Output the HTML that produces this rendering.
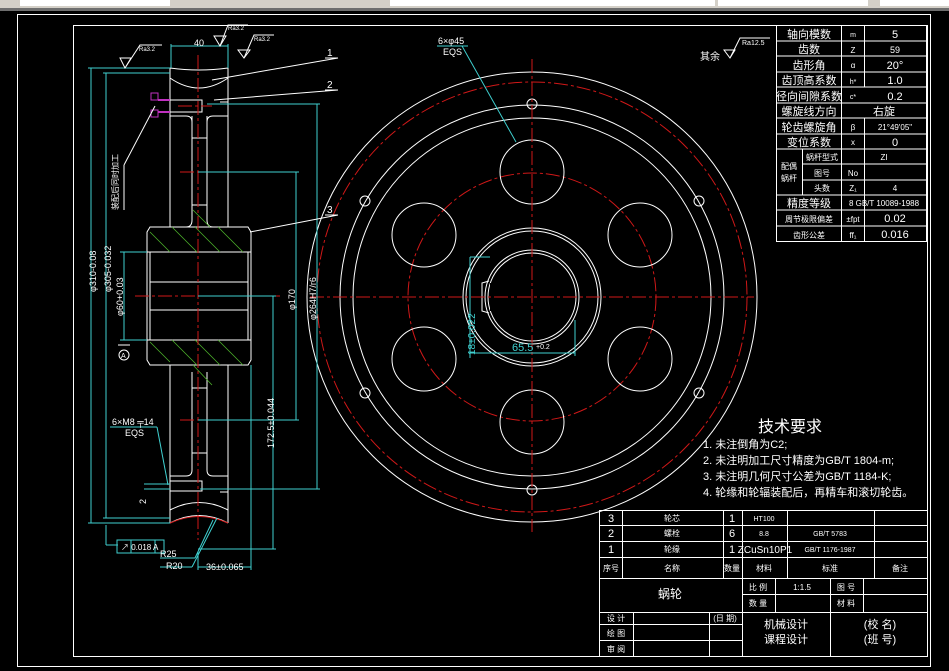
<!DOCTYPE html>
<html><head><meta charset="utf-8"><style>
html,body{margin:0;padding:0;background:#000;width:949px;height:671px;overflow:hidden}
svg{display:block}
text{font-family:"Liberation Sans","Noto Sans CJK SC",sans-serif;fill:#fff}
.c{stroke:#3fd0d0;fill:none;stroke-width:1}
.w{stroke:#fff;fill:none;stroke-width:1}
.r{stroke:#d01818;fill:none;stroke-width:1;stroke-dasharray:14 3 3 3}
.g{stroke:#4caf2a;stroke-width:0.8}
.ct{fill:#3fd0d0}
.t{font-size:10px}
</style></head><body>
<svg width="949" height="671" viewBox="0 0 949 671" xmlns="http://www.w3.org/2000/svg">
<!-- toolbar -->
<rect x="0" y="0" width="949" height="8" fill="#d4d0c8"/>
<rect x="0" y="8" width="949" height="3" fill="#6e6e6e"/>
<rect x="20" y="0" width="150" height="6" fill="#fff"/>
<rect x="390" y="0" width="240" height="6" fill="#fff"/>
<rect x="555" y="0" width="160" height="6" fill="#fff"/>
<rect x="718" y="0" width="150" height="6" fill="#fff"/>
<rect x="880" y="0" width="69" height="6" fill="#fff"/>
<!-- frames -->
<rect x="17.5" y="14.5" width="913" height="652" class="w"/>
<rect x="73.5" y="25.5" width="854" height="631" class="w"/>

<!-- ===== Right view (circle) ===== -->
<g transform="translate(532,297)">
<circle r="225" class="w"/>
<circle r="215" class="r"/>
<circle r="192" class="w"/>
<circle r="179" class="w"/>
<circle r="124" class="r"/>
<circle r="69" class="w"/>
<circle r="66" class="w"/>
<circle r="47" class="w"/>
<circle r="44" class="w"/>
<g class="w">
<circle cx="0" cy="-125" r="32"/><circle cx="0" cy="125" r="32"/>
<circle cx="-108" cy="-62" r="32"/><circle cx="108" cy="-62" r="32"/>
<circle cx="-108" cy="62" r="32"/><circle cx="108" cy="62" r="32"/>
<circle cx="0" cy="-193" r="5"/><circle cx="0" cy="193" r="5"/>
<circle cx="-167" cy="-96" r="5"/><circle cx="167" cy="-96" r="5"/>
<circle cx="-167" cy="96" r="5"/><circle cx="167" cy="96" r="5"/>
</g>
<path d="M-42,-14 L-40,-14 L-40,14 L-42,14" fill="#000" stroke="none"/>
<path d="M-43,-16 L-50,-14 L-50,14 L-43,16" class="w"/>
<line x1="-222" y1="0" x2="222" y2="0" class="r"/>
<line x1="0" y1="-238" x2="0" y2="235" class="r"/>
</g>
<!-- keyway dims -->
<line x1="470" y1="257" x2="470" y2="358" class="c"/>
<line x1="470" y1="257" x2="490" y2="257" class="c"/>
<line x1="470" y1="353" x2="575" y2="353" class="c"/>
<line x1="575" y1="320" x2="575" y2="356" class="c"/>
<text x="475" y="355" class="ct" font-size="10" transform="rotate(-90 475 355)">18±0.022</text>
<text x="512" y="351" class="ct" font-size="11">65.5</text>
<text x="536" y="349" fill="#4caf2a" font-size="7">+0.2</text>
<!-- leader 6xφ45 -->
<line x1="437" y1="46" x2="468" y2="46" class="c"/>
<line x1="462" y1="46" x2="516" y2="142" class="c"/>
<text x="438" y="44" font-size="9">6×φ45</text>
<text x="443" y="55" font-size="9">EQS</text>
<!-- roughness 其余 -->
<text x="700" y="60" font-size="10">其余</text>
<path d="M724,50 L735,50 L730,58 Z M730,58 L740,38 L770,38" class="w"/>
<text x="742" y="45" font-size="7">Ra12.5</text>

<!-- ===== Left view (section) ===== -->
<g class="w">
<path d="M170,68 L170,227 M228,68 L228,227"/>
<path d="M170,68 Q199,72 228,68"/>
<path d="M170,78 Q199,98 228,78"/>
<path d="M192,116 L192,220 Q192,227 186,227 M207,116 L207,220 Q207,227 213,227"/>
<path d="M170,116 L186,116 Q192,116 192,122 M228,116 L213,116 Q207,116 207,122"/>
<path d="M192,138 L207,138 M192,205 L207,205"/>
<path d="M150,227 L248,227 L251,232 L251,360 L248,365 L150,365 L147,360 L147,232 Z"/>
<path d="M147,252 L251,252 M147,340 L251,340 M150,252 L150,340 M248,252 L248,340"/>
<path d="M150,282 L248,282 M150,310 L248,310"/>
<path d="M170,365 L170,523 M228,365 L228,523"/>
<path d="M192,372 L192,470 Q192,476 186,476 L170,476 M207,372 L207,470 Q207,476 213,476 L228,476"/>
<path d="M192,388 L207,388 M192,453 L207,453"/>
<path d="M170,523 Q199,508 228,523 M170,510 Q199,495 228,510"/>
<rect x="170" y="100" width="32" height="12"/>
<rect x="170" y="481" width="32" height="10"/>
<path d="M220,102 L228,102 L228,98 M220,492 L228,492"/>
</g>
<!-- hatch -->
<g class="g">
<path d="M150,232 L170,252 M172,227 L197,252 M195,227 L220,252 M218,227 L243,252 M193,210 L210,227"/>
<path d="M150,342 L170,362 M172,340 L197,365 M195,340 L220,365 M218,340 L243,365 M193,365 L212,385"/>
</g>
<line x1="198" y1="55" x2="198" y2="540" class="r"/>
<line x1="178" y1="106" x2="212" y2="106" class="r"/>
<line x1="135" y1="296" x2="280" y2="296" class="r"/>
<line x1="180" y1="172" x2="200" y2="172" class="r"/>
<line x1="180" y1="420" x2="200" y2="420" class="r"/>
<path d="M170,523 Q199,510 228,523" stroke="#d01818" fill="none"/>
<!-- magenta -->
<rect x="151" y="93" width="7" height="7" fill="none" stroke="#c030c0"/>
<rect x="151" y="110" width="7" height="7" fill="none" stroke="#c030c0"/>
<path d="M158,100 L170,100 M158,112 L170,112" stroke="#c030c0" stroke-width="2"/>
<!-- cyan dims -->
<g class="c">
<line x1="88" y1="68" x2="170" y2="68"/><line x1="91" y1="68" x2="91" y2="523"/><line x1="88" y1="523" x2="170" y2="523"/>
<line x1="103" y1="73" x2="170" y2="73"/><line x1="106" y1="73" x2="106" y2="518"/><line x1="103" y1="518" x2="170" y2="518"/>
<line x1="120" y1="252" x2="147" y2="252"/><line x1="124" y1="252" x2="124" y2="340"/><line x1="120" y1="340" x2="147" y2="340"/>
<line x1="198" y1="172" x2="299" y2="172"/><line x1="296" y1="172" x2="296" y2="420"/><line x1="198" y1="420" x2="299" y2="420"/>
<line x1="207" y1="104" x2="320" y2="104"/><line x1="317" y1="104" x2="317" y2="489"/><line x1="200" y1="489" x2="320" y2="489"/>
<line x1="198" y1="296" x2="276" y2="296"/><line x1="273" y1="296" x2="273" y2="549"/><line x1="198" y1="549" x2="276" y2="549"/>
<line x1="171" y1="46" x2="228" y2="46"/><line x1="171" y1="44" x2="171" y2="68"/><line x1="228" y1="44" x2="228" y2="68"/>
<line x1="198" y1="552" x2="198" y2="570"/><line x1="251" y1="365" x2="251" y2="570"/><line x1="198" y1="567" x2="251" y2="567"/>
<line x1="106" y1="525" x2="106" y2="545"/><line x1="106" y1="545" x2="118" y2="545"/>
<rect x="117" y="540" width="47" height="13"/><line x1="131" y1="540" x2="131" y2="553"/><line x1="155" y1="540" x2="155" y2="553"/>
<line x1="160" y1="558" x2="195" y2="558"/><line x1="160" y1="567" x2="192" y2="567"/>
<line x1="195" y1="558" x2="213" y2="520"/><line x1="192" y1="567" x2="217" y2="518"/>
<line x1="110" y1="427" x2="157" y2="427"/><line x1="157" y1="427" x2="168" y2="485"/>
<line x1="144" y1="484" x2="170" y2="484"/><line x1="144" y1="489" x2="170" y2="489"/>
</g>
<g class="ct" font-size="9">
<text x="96" y="292" transform="rotate(-90 96 292)">φ310-0.08</text>
<text x="111" y="292" transform="rotate(-90 111 292)">φ305-0.032</text>
<text x="123" y="316" transform="rotate(-90 123 316)">φ60+0.03</text>
<text x="295" y="310" transform="rotate(-90 295 310)">φ170</text>
<text x="316" y="320" transform="rotate(-90 316 320)">φ264H7/r6</text>
<text x="274" y="448" transform="rotate(-90 274 448)">172.5±0.044</text>
<text x="194" y="46">40</text>
<text x="121" y="550" font-size="8">↗ 0.018 A</text>
<text x="160" y="557">R25</text>
<text x="166" y="569">R20</text>
<text x="206" y="570">36±0.065</text>
<text x="146" y="504" transform="rotate(-90 146 504)">2</text>
</g>
<text x="112" y="425" font-size="9">6×M8 ╤14</text>
<text x="125" y="436" font-size="9">EQS</text>
<circle cx="124" cy="355" r="5" class="w"/><text x="121" y="358" font-size="7">A</text>
<line x1="118" y1="345" x2="130" y2="345" class="w"/>
<!-- roughness left -->
<g class="w">
<path d="M120,58 L131,58 L125,68 Z M125,68 L140,45 L162,45"/>
<path d="M214,36 L226,36 L220,46 Z M220,46 L228,25 L248,25"/>
<path d="M238,50 L250,50 L244,58 Z M244,58 L254,35 L274,35"/>
</g>
<text x="139" y="51" font-size="6">Ra3.2</text>
<text x="228" y="30" font-size="6">Ra3.2</text>
<text x="254" y="41" font-size="6">Ra3.2</text>
<!-- leaders 1 2 3 -->
<g class="w">
<line x1="212" y1="80" x2="338" y2="58"/><line x1="325" y1="58" x2="338" y2="58"/>
<line x1="214" y1="100" x2="338" y2="90"/><line x1="325" y1="90" x2="338" y2="90"/>
<line x1="250" y1="232" x2="338" y2="215"/><line x1="325" y1="215" x2="338" y2="215"/>
<line x1="155" y1="106" x2="124" y2="165"/><line x1="124" y1="165" x2="124" y2="210"/>
</g>
<text x="327" y="56" font-size="10">1</text>
<text x="327" y="88" font-size="10">2</text>
<text x="327" y="213" font-size="10">3</text>
<text x="118" y="210" font-size="8" transform="rotate(-90 118 210)">装配后同时加工</text>

<!-- ===== param table ===== -->
<g class="w">
<rect x="776.5" y="25.5" width="150" height="216"/>
<path d="M841.5,25 V241 M864.5,25 V87 M864.5,118 V241 M802.5,149 V195"/>
<path d="M776,41 H927 M776,56 H927 M776,72 H927 M776,87 H927 M776,103 H927 M776,118 H927 M776,134 H927 M776,149 H927 M802,164 H927 M802,180 H927 M776,195 H927 M776,210 H927 M776,226 H927"/>
</g>
<g font-size="11" text-anchor="middle">
<text x="809" y="38">轴向模数</text><text x="853" y="37" font-size="7">m</text><text x="895" y="38">5</text>
<text x="809" y="53">齿数</text><text x="853" y="53" font-size="8">Z</text><text x="895" y="53" font-size="9">59</text>
<text x="809" y="69">齿形角</text><text x="853" y="68" font-size="8">α</text><text x="895" y="69">20°</text>
<text x="809" y="84">齿顶高系数</text><text x="853" y="84" font-size="7">h*</text><text x="895" y="84">1.0</text>
<text x="809" y="100">径向间隙系数</text><text x="853" y="99" font-size="7">c*</text><text x="895" y="100">0.2</text>
<text x="809" y="115">螺旋线方向</text><text x="884" y="115">右旋</text>
<text x="809" y="131">轮齿螺旋角</text><text x="853" y="130" font-size="8">β</text><text x="895" y="130" font-size="8">21°49'05"</text>
<text x="809" y="146">变位系数</text><text x="853" y="145" font-size="8">x</text><text x="895" y="146">0</text>
<text x="789" y="169" font-size="8">配偶</text><text x="789" y="181" font-size="8">蜗杆</text>
<text x="822" y="160" font-size="8">蜗杆型式</text><text x="884" y="160" font-size="8">ZI</text>
<text x="822" y="176" font-size="8">图号</text><text x="853" y="176" font-size="8">No</text>
<text x="822" y="191" font-size="8">头数</text><text x="853" y="191" font-size="8">Z₁</text><text x="895" y="191" font-size="8">4</text>
<text x="809" y="207">精度等级</text><text x="884" y="206" font-size="8">8 GB/T 10089-1988</text>
<text x="809" y="222" font-size="8">周节极限偏差</text><text x="853" y="222" font-size="8">±fpt</text><text x="895" y="222">0.02</text>
<text x="809" y="238" font-size="8">齿形公差</text><text x="853" y="238" font-size="8">ff₁</text><text x="895" y="238">0.016</text>
</g>

<!-- tech text -->
<text x="758" y="432" font-size="16">技术要求</text>
<g font-size="11">
<text x="703" y="448">1. 未注倒角为C2;</text>
<text x="703" y="464">2. 未注明加工尺寸精度为GB/T 1804-m;</text>
<text x="703" y="480">3. 未注明几何尺寸公差为GB/T 1184-K;</text>
<text x="703" y="496">4. 轮缘和轮辐装配后，再精车和滚切轮齿。</text>
</g>

<!-- ===== bottom title table ===== -->
<g class="w">
<rect x="599.5" y="510.5" width="328" height="146"/>
<path d="M599,525.5 H928 M599,541.5 H928 M599,557.5 H928 M599,578.5 H928 M599,612.5 H928 M742,594.5 H928 M599,624.5 H742 M599,640.5 H742"/>
<path d="M622.5,510 V578 M723.5,510 V578 M742.5,510 V657 M787.5,510 V578 M874.5,510 V578 M775.5,578 V612 M830.5,578 V657 M863.5,578 V612 M633.5,612 V657 M709.5,612 V657"/>
</g>
<g font-size="8" text-anchor="middle">
<text x="611" y="522" font-size="11">3</text><text x="672" y="521">轮芯</text><text x="732" y="522" font-size="11">1</text><text x="764" y="521" font-size="7">HT100</text>
<text x="611" y="537" font-size="11">2</text><text x="672" y="536">螺栓</text><text x="732" y="537" font-size="11">6</text><text x="764" y="536" font-size="7">8.8</text><text x="830" y="536" font-size="7">GB/T 5783</text>
<text x="611" y="553" font-size="11">1</text><text x="672" y="552">轮缘</text><text x="732" y="553" font-size="11">1</text><text x="765" y="553" font-size="10">ZCuSn10P1</text><text x="830" y="552" font-size="7">GB/T 1176-1987</text>
<text x="611" y="571">序号</text><text x="672" y="571">名称</text><text x="732" y="571">数量</text><text x="764" y="571">材料</text><text x="830" y="571">标准</text><text x="900" y="571">备注</text>
<text x="670" y="598" font-size="12">蜗轮</text>
<text x="758" y="590">比 例</text><text x="802" y="590">1:1.5</text><text x="846" y="590">图 号</text>
<text x="758" y="606">数 量</text><text x="846" y="606">材 料</text>
<text x="616" y="621">设 计</text><text x="725" y="621">(日 期)</text>
<text x="616" y="636">绘 图</text><text x="616" y="652">审 阅</text>
<text x="786" y="628" font-size="11">机械设计</text><text x="786" y="643" font-size="11">课程设计</text>
<text x="880" y="628" font-size="11">(校 名)</text><text x="880" y="643" font-size="11">(班 号)</text>
</g>
</svg>
</body></html>
